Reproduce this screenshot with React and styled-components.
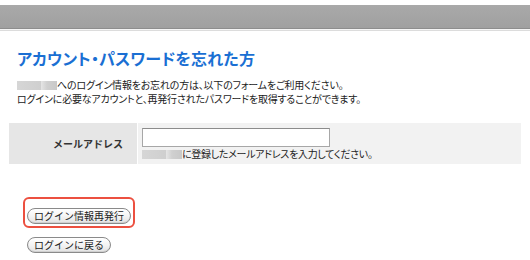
import React from "react";
import styled, { createGlobalStyle } from "styled-components";

const Global = createGlobalStyle`
  html, body { margin: 0; padding: 0; background: #fff; }
  body { font-family: "Noto Sans CJK JP", "Noto Sans", sans-serif; color: #222; }
`;

const Page = styled.div`
  width: 530px;
  height: 260px;
  overflow: hidden;
  padding-top: 5px;
  box-sizing: border-box;
`;

const HeaderBar = styled.div`
  height: 23px;
  background: linear-gradient(#a9a9a9, #a0a0a0);
  border-bottom: 1px solid #8d8d8d;
  box-shadow: 0 1px 0 #f4f4f4, 0 2px 0 #dcdcdc;
`;

const Content = styled.div`
  padding: 19px 0 0 17px;
`;

const Title = styled.h1`
  margin: 0;
  font-size: 16px;
  line-height: 20px;
  font-weight: bold;
  color: #1a6fd3;
  font-feature-settings: "palt";
  letter-spacing: 0.2px;
`;

const Lead = styled.p`
  margin: 10px 0 0;
  font-size: 10px;
  line-height: 14px;
  color: #222;
  font-feature-settings: "palt";
  letter-spacing: -0.2px;
`;

const Blur = styled.span`
  display: inline-block;
  width: ${(p) => p.$w}px;
  height: 9px;
  vertical-align: -1px;
  background: linear-gradient(90deg, #d6d6d6 0, #cfcfcf 60%, #e4e4e4 61%, #d0d0d0 75%, #c8c8c8 100%);
  filter: blur(0.6px);
`;

const FormTable = styled.div`
  display: grid;
  grid-template-columns: 128px 1fr;
  gap: 1px;
  margin: 17px 9px 0 -8px;
  height: 41px;
`;

const LabelCell = styled.div`
  background: #e6e6e6;
  display: flex;
  align-items: center;
  justify-content: flex-end;
  padding-right: 14px;
  font-size: 10px;
  font-weight: bold;
  color: #333;
`;

const ValueCell = styled.div`
  background: #f2f2f2;
  padding: 5px 0 0 4px;
`;

const Input = styled.div`
  width: 186px;
  height: 17px;
  background: #fff;
  border: 1px solid #a7a7a7;
  border-top-color: #8c8c8c;
`;

const Hint = styled.div`
  margin-top: 0;
  font-size: 10px;
  line-height: 13px;
  color: #222;
  font-feature-settings: "palt";
  letter-spacing: -0.3px;
`;

const Buttons = styled.div`
  display: flex;
  flex-direction: column;
  align-items: flex-start;
  gap: 9px;
  margin: 33px 0 0 6px;
`;

const Highlight = styled.div`
  border: 2px solid #ec5040;
  border-radius: 6px;
  padding: 2px 2px 1px;
`;

const Pill = styled.button`
  font-family: inherit;
  font-size: 10px;
  line-height: 14px;
  padding: 0 6px;
  height: 16px;
  border-radius: 8px;
  border: 1px solid #8a8a8a;
  background: linear-gradient(#ffffff, #f4f4f4 50%, #e2e2e2);
  color: #222;
  box-shadow: inset 0 -1px 0 #d0d0d0;
  margin-left: ${(p) => (p.$offset ? "4px" : "0")};
`;

export default function App() {
  return (
    <Page>
      <Global />
      <HeaderBar />
      <Content>
        <Title>アカウント・パスワードを忘れた方</Title>
        <Lead>
          <Blur $w={40} />へのログイン情報をお忘れの方は、以下のフォームをご利用ください。
          <br />
          ログインに必要なアカウントと、再発行されたパスワードを取得することができます。
        </Lead>
        <FormTable>
          <LabelCell>メールアドレス</LabelCell>
          <ValueCell>
            <Input />
            <Hint>
              <Blur $w={40} />に登録したメールアドレスを入力してください。
            </Hint>
          </ValueCell>
        </FormTable>
        <Buttons>
          <Highlight>
            <Pill>ログイン情報再発行</Pill>
          </Highlight>
          <Pill $offset>ログインに戻る</Pill>
        </Buttons>
      </Content>
    </Page>
  );
}
